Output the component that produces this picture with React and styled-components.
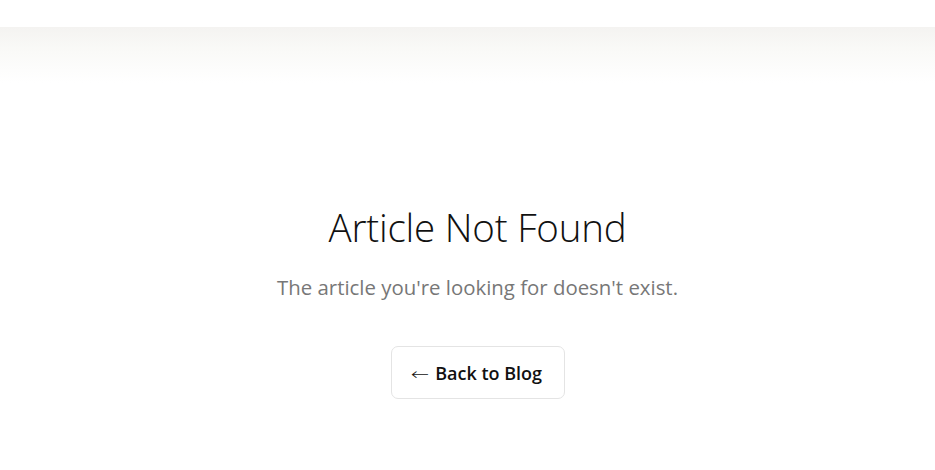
import React from "react";
import styled, { createGlobalStyle } from "styled-components";

const Global = createGlobalStyle`
  html, body { margin: 0; padding: 0; background: #fff; }
  body { font-family: "Open Sans", "Noto Sans", sans-serif; color: #111; }
`;

const Page = styled.div`
  display: flex;
  flex-direction: column;
  min-height: 470px;
`;

const TopBar = styled.div`
  height: 27px;
  background: #fff;
`;

const Fade = styled.div`
  height: 56px;
  background: linear-gradient(to bottom, #f4f3f1 0%, #fafaf8 45%, #fff 100%);
`;

const Main = styled.main`
  display: flex;
  flex-direction: column;
  align-items: center;
  padding: 116px 0 0 20px;
`;

const Title = styled.h1`
  margin: 0;
  font-weight: 300;
  font-size: 38.5px;
  line-height: 56px;
  color: #111;
  letter-spacing: -0.2px;
`;

const Sub = styled.p`
  margin: 18px 0 0;
  font-size: 20.4px;
  line-height: 28px;
  color: #777;
`;

const BackButton = styled.a`
  margin-top: 45px;
  display: inline-flex;
  align-items: center;
  justify-content: center;
  gap: 6px;
  width: 174px;
  height: 53px;
  box-sizing: border-box;
  border: 1px solid #e4e4e4;
  border-radius: 7px;
  font-size: 18px;
  font-weight: 600;
  color: #111;
  text-decoration: none;
  background: #fff;
`;

const Arrow = styled.span`
  font-family: "DejaVu Sans", sans-serif;
  font-weight: 300;
  font-size: 17px;
  line-height: 1;
  display: inline-block;
  transform: translateY(2px) scaleX(1.3);
  margin: 0 2px 0 0;
`;

export default function App() {
  return (
    <Page>
      <Global />
      <TopBar />
      <Fade />
      <Main>
        <Title>Article Not Found</Title>
        <Sub>The article you're looking for doesn't exist.</Sub>
        <BackButton href="#">
          <Arrow>←</Arrow>
          <span>Back to Blog</span>
        </BackButton>
      </Main>
    </Page>
  );
}
